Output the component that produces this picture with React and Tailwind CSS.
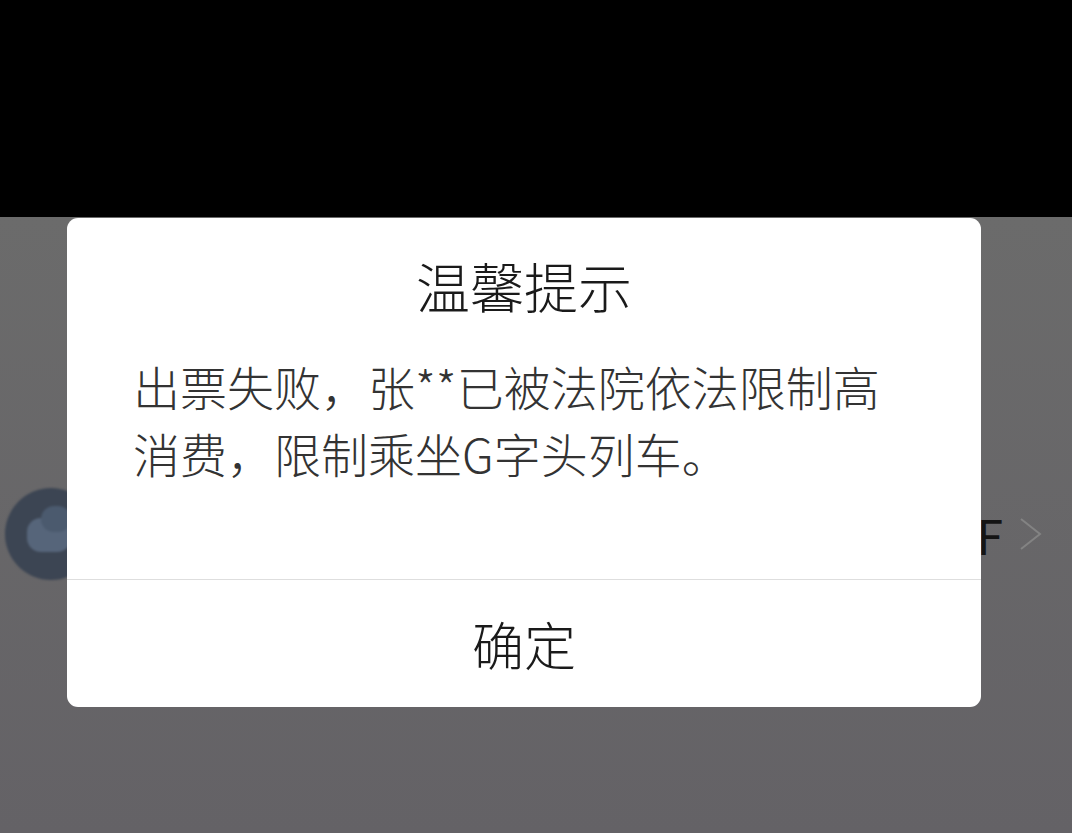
const cjk = { fontFamily: '"Noto Sans CJK SC", "Noto Sans", sans-serif' };

function BackgroundRow() {
  return (
    <div className="mt-[271px] flex h-[92px] items-center justify-between pl-[5px] pr-[29px]">
      <div className="relative h-[92px] w-[92px] rounded-full bg-[#3c4553] blur-[1px]">
        <div className="absolute left-[22px] top-[30px] h-[34px] w-[44px] rounded-[14px] bg-[#56657a]" />
        <div className="absolute left-[36px] top-[18px] h-[26px] w-[30px] rounded-full bg-[#4b5a6e]" />
      </div>
      <div className="flex items-center gap-[16px]">
        <span className="text-[48px] leading-none text-[#141414]" style={cjk}>F</span>
        <svg width="24" height="32" viewBox="0 0 24 32" fill="none" className="blur-[0.5px]">
          <path d="M2 1 L21 16 L2 31" stroke="#838383" strokeWidth="2" />
        </svg>
      </div>
    </div>
  );
}

function AlertDialog() {
  return (
    <div className="absolute left-[67px] top-[1px] flex h-[489px] w-[914px] flex-col overflow-hidden rounded-[11px] bg-white" style={cjk}>
      <div className="flex h-[362px] flex-col border-b border-[#dedede]">
        <div className="mt-[41px] text-center text-[54px] font-light leading-[54px] text-[#1a1a1a]">温馨提示</div>
        <div className="mt-[39px] whitespace-nowrap pl-[66px] text-[47px] font-light leading-[67px] text-[#333333]">
          出票失败，张**已被法院依法限制高
          <br />
          消费，限制乘坐G字头列车。
        </div>
      </div>
      <button type="button" className="flex flex-1 items-center justify-center text-[52px] font-light leading-none text-[#1a1a1a]">
        确定
      </button>
    </div>
  );
}

export default function App() {
  return (
    <div className="flex h-[833px] w-[1072px] flex-col overflow-hidden bg-black">
      <div className="h-[217px] shrink-0 bg-black" />
      <div className="relative flex-1 bg-gradient-to-b from-[#6b6b6b] to-[#646266]">
        <BackgroundRow />
        <AlertDialog />
      </div>
    </div>
  );
}
